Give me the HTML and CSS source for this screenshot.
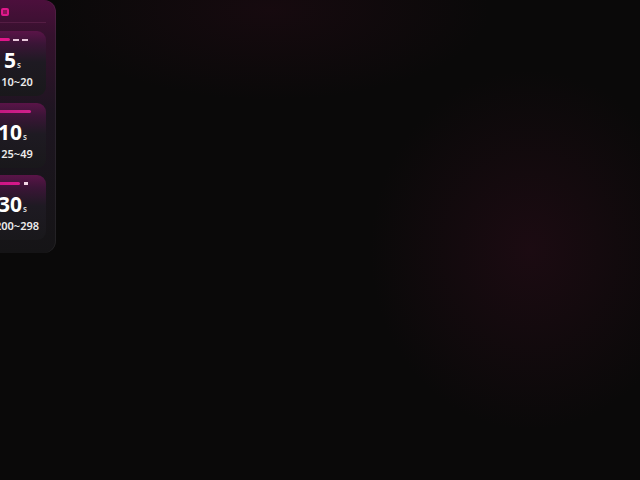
FILE: index.html
```html
<!DOCTYPE html>
<html>
<head>
<meta charset="utf-8">
<link rel="stylesheet" href="styles.css">
</head>
<body>
<div class="stage">
  <aside class="panel">
    <div class="panel-head"><span class="head-icon"></span></div>
    <div class="cards">
      <div class="card">
        <div class="strip"><span class="bar bar-1"></span><span class="dash"></span><span class="dash"></span></div>
        <div class="num">5<small>s</small></div>
        <div class="range">10~20</div>
      </div>
      <div class="card">
        <div class="strip"><span class="bar bar-2"></span></div>
        <div class="num">10<small>s</small></div>
        <div class="range">25~49</div>
      </div>
      <div class="card">
        <div class="strip"><span class="bar bar-3"></span><span class="dot"></span></div>
        <div class="num">30<small>s</small></div>
        <div class="range">200~298</div>
      </div>
    </div>
  </aside>
</div>
</body>
</html>
```

FILE: styles.css
```css
html, body {
  margin: 0;
  padding: 0;
  background: #0a0909;
}
.stage {
  width: 640px;
  height: 480px;
  overflow: hidden;
  font-family: "Noto Sans", "Open Sans", sans-serif;
  background:
    radial-gradient(ellipse 160px 180px at 530px 250px, rgba(56, 14, 32, 0.38), rgba(56, 14, 32, 0) 100%),
    radial-gradient(ellipse 220px 90px at 270px 10px, rgba(50, 12, 28, 0.3), rgba(50, 12, 28, 0) 100%),
    #0a0909;
}
.panel {
  width: 78px;
  height: 253px;
  margin-left: -22px;
  box-sizing: border-box;
  padding: 0 10px 0 0;
  border-radius: 0 12px 12px 0;
  background: linear-gradient(180deg, #4c0f3c 0%, #35112d 14%, #1d1520 45%, #151416 100%);
  box-shadow: inset -1px 0 0 rgba(255, 255, 255, 0.06);
}
.panel-head {
  height: 23px;
  display: flex;
  align-items: center;
  padding-left: 23px;
  border-bottom: 1px solid rgba(255, 120, 200, 0.12);
  box-sizing: border-box;
}
.head-icon {
  width: 4px;
  height: 4px;
  margin-top: 2px;
  border: 2px solid #e0188c;
  border-radius: 2px;
  background: #8a1458;
}
.cards {
  display: flex;
  flex-direction: column;
  gap: 7px;
  padding-top: 8px;
}
.card {
  height: 65px;
  box-sizing: border-box;
  padding: 6px 0 0 9px;
  border-radius: 0 9px 9px 0;
  background: linear-gradient(180deg, #5a1448 0%, #3a1536 20%, #1e1a22 48%, #19181b 100%);
  display: flex;
  flex-direction: column;
  align-items: center;
  color: #fff;
}
.strip {
  align-self: stretch;
  margin-left: -9px;
  height: 5px;
  display: flex;
  align-items: center;
  gap: 2px;
}
.bar {
  height: 3px;
  border-radius: 0 2px 2px 0;
  background: #e0168a;
}
.bar-1 { width: 32px; }
.bar-2 { width: 53px; background: linear-gradient(90deg, #b81478, #d0208c); }
.bar-3 { width: 42px; background: linear-gradient(90deg, #c0147c, #d8188c); }
.dash {
  width: 6px;
  height: 2px;
  margin-left: 1px;
  background: #e8c8dc;
}
.dot {
  width: 4px;
  height: 3px;
  margin-left: 2px;
  background: #f0d8e6;
}
.num {
  margin-top: 7px;
  font-size: 21px;
  font-weight: 700;
  line-height: 22px;
  padding-right: 8px;
}
.num small {
  font-size: 8px;
  font-weight: 600;
  margin-left: 1px;
  color: #ddd;
}
.range {
  margin-top: -1px;
  padding-left: 1px;
  font-size: 11px;
  font-weight: 600;
  line-height: 14px;
  color: #ececec;
}
```
